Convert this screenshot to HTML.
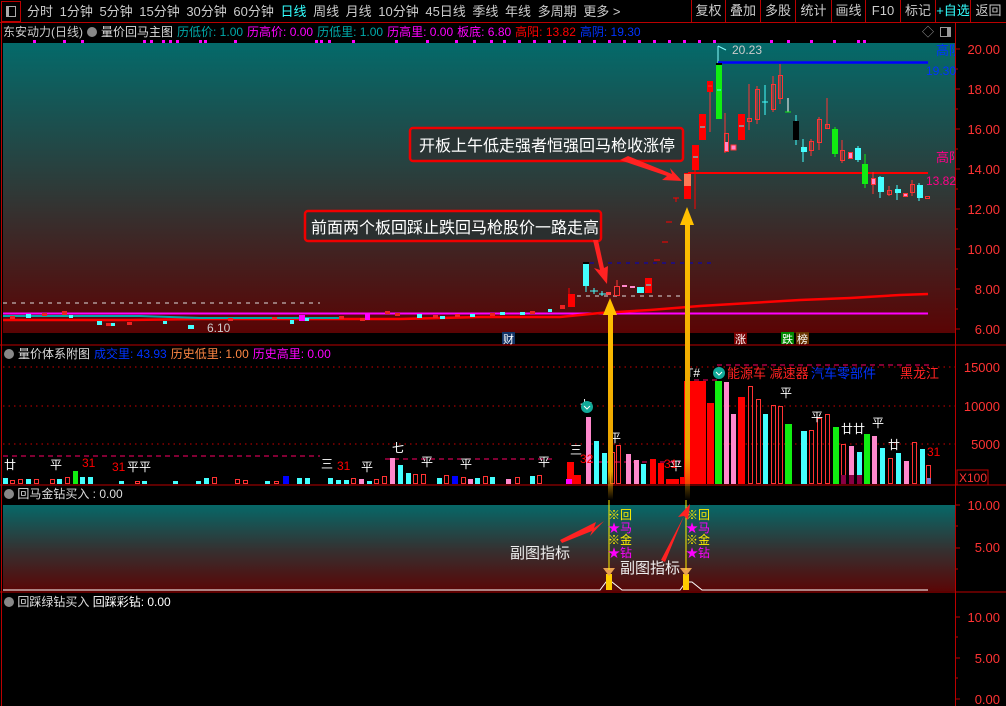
<!DOCTYPE html>
<html><head><meta charset="utf-8"><style>
*{margin:0;padding:0;box-sizing:border-box}
body{width:1006px;height:706px;background:#000;overflow:hidden;position:relative;font-family:"Liberation Sans","Noto Sans CJK SC",sans-serif;font-size:12px;color:#c8c8c8}
.a{position:absolute;white-space:nowrap;line-height:1}
.tb span{margin-right:6.6px}
.tr span{margin-right:4px}
.btn{position:absolute;top:0;height:22px;border-left:1px solid #b00;font-size:13px;line-height:22px;text-align:center;color:#ccc}
</style></head><body>
<div class="a" style="left:0;top:0;width:1006px;height:23px;border-bottom:1px solid #b00"></div>
<div class="a" style="left:1px;top:1px;width:20px;height:21px;border:1px solid #b00"></div>
<div class="a" style="left:6px;top:6px;width:10px;height:11px;border:1px solid #aaa;border-left-width:3px"></div>
<div class="a tb" style="left:27px;top:5px;font-size:13px;color:#ccc"><span>分时</span><span>1分钟</span><span>5分钟</span><span>15分钟</span><span>30分钟</span><span>60分钟</span><span style="color:#3ff">日线</span><span>周线</span><span>月线</span><span>10分钟</span><span>45日线</span><span>季线</span><span>年线</span><span>多周期</span><span>更多 &gt;</span></div>
<div class="btn" style="left:691px;width:34px">复权</div>
<div class="btn" style="left:725px;width:35px">叠加</div>
<div class="btn" style="left:760px;width:35px">多股</div>
<div class="btn" style="left:795px;width:36px">统计</div>
<div class="btn" style="left:831px;width:34px">画线</div>
<div class="btn" style="left:865px;width:35px">F10</div>
<div class="btn" style="left:900px;width:35px">标记</div>
<div class="btn" style="left:935px;width:35px;color:#3ff">+自选</div>
<div class="btn" style="left:970px;width:36px">返回</div>
<div class="a tr" style="left:3px;top:26px;font-size:12px"><span style="color:#ccc">东安动力(日线)</span><span style="display:inline-block;width:10px;height:10px;border-radius:50%;background:#888;vertical-align:-1px"></span><span style="color:#ddd">量价回马主图</span><span style="color:#0aa">历低价: 1.00</span><span style="color:#f0f">历高价: 0.00</span><span style="color:#0aa">历低里: 1.00</span><span style="color:#f0f">历高里: 0.00</span><span style="color:#f0f">板底: 6.80</span><span style="color:#f00">高阳: 13.82</span><span style="color:#03f">高阴: 19.30</span></div>
<div class="a" style="left:922px;top:26px;color:#999;font-size:12px">◇</div>
<div class="a" style="left:940px;top:27px;width:11px;height:10px;border:1px solid #999;border-right-width:4px"></div>
<div class="a" style="left:955px;top:23px;width:1px;height:683px;background:#b00"></div>
<div class="a" style="left:1px;top:23px;width:1px;height:683px;background:#b00"></div>

<svg class="a" style="left:0;top:0" width="1006" height="706" xmlns="http://www.w3.org/2000/svg" font-family="Liberation Sans,Noto Sans CJK SC,sans-serif">
<defs>
<linearGradient id="g1" x1="0" y1="0" x2="0" y2="1"><stop offset="0" stop-color="#046a6a"/><stop offset="0.5" stop-color="#2e3a38"/><stop offset="1" stop-color="#5a0404"/></linearGradient>
<linearGradient id="g2" x1="0" y1="0" x2="0" y2="1"><stop offset="0" stop-color="#066868"/><stop offset="0.5" stop-color="#333"/><stop offset="1" stop-color="#5a0606"/></linearGradient>
<linearGradient id="ga" x1="0" y1="0" x2="0" y2="1"><stop offset="0" stop-color="#ffc000"/><stop offset="0.85" stop-color="#e8a000"/><stop offset="1" stop-color="#e8a000" stop-opacity="0"/></linearGradient>
</defs>
<g fill="#f0f">
<rect x="33" y="40" width="3" height="3"/><rect x="63" y="40" width="3" height="3"/><rect x="81" y="40" width="3" height="3"/><rect x="143" y="40" width="3" height="3"/><rect x="150" y="40" width="3" height="3"/><rect x="162" y="40" width="3" height="3"/><rect x="169" y="40" width="3" height="3"/><rect x="176" y="40" width="3" height="3"/><rect x="199" y="40" width="3" height="3"/><rect x="204" y="40" width="3" height="3"/><rect x="234" y="40" width="3" height="3"/><rect x="315" y="40" width="3" height="3"/><rect x="320" y="40" width="3" height="3"/><rect x="328" y="40" width="3" height="3"/><rect x="352" y="40" width="3" height="3"/><rect x="395" y="40" width="3" height="3"/><rect x="426" y="40" width="3" height="3"/><rect x="455" y="40" width="3" height="3"/><rect x="473" y="40" width="3" height="3"/><rect x="490" y="40" width="3" height="3"/><rect x="503" y="40" width="3" height="3"/><rect x="518" y="40" width="3" height="3"/><rect x="533" y="40" width="3" height="3"/><rect x="548" y="40" width="3" height="3"/><rect x="563" y="40" width="3" height="3"/><rect x="578" y="40" width="3" height="3"/><rect x="593" y="40" width="3" height="3"/><rect x="608" y="40" width="3" height="3"/><rect x="623" y="40" width="3" height="3"/><rect x="638" y="40" width="3" height="3"/><rect x="653" y="40" width="3" height="3"/><rect x="668" y="40" width="3" height="3"/><rect x="683" y="40" width="3" height="3"/><rect x="698" y="40" width="3" height="3"/><rect x="713" y="40" width="3" height="3"/><rect x="770" y="40" width="3" height="3"/><rect x="787" y="40" width="3" height="3"/><rect x="810" y="40" width="3" height="3"/><rect x="833" y="40" width="3" height="3"/><rect x="857" y="40" width="3" height="3"/><rect x="863" y="40" width="3" height="3"/>
</g>
<rect x="3" y="43" width="952" height="290" fill="url(#g1)"/>
<g fill="#f33" font-size="13" text-anchor="end">
<text x="1000" y="54">20.00</text><text x="1000" y="94">18.00</text><text x="1000" y="134">16.00</text><text x="1000" y="174">14.00</text><text x="1000" y="214">12.00</text><text x="1000" y="254">10.00</text><text x="1000" y="294">8.00</text><text x="1000" y="334">6.00</text>
</g>
<g stroke="#b00"><path d="M955 49h5M955 69h3M955 89h5M955 109h3M955 129h5M955 149h3M955 169h5M955 189h3M955 209h5M955 229h3M955 249h5M955 269h3M955 289h5M955 309h3M955 329h5"/></g>
<svg x="0" y="0" width="955" height="340"><text x="936" y="55" fill="#03f" font-size="13">高阴</text><text x="936" y="162" fill="#f08" font-size="13">高阳</text></svg>
<text x="926" y="75" fill="#03f" font-size="12">19.30</text>
<text x="926" y="185" fill="#f08" font-size="12">13.82</text>
<text x="732" y="54" fill="#ccc" font-size="12">20.23</text>
<path d="M718 46v18M718 46l8 4" stroke="#8ff" fill="none"/>
<path d="M718 62.5H928" stroke="#00f" stroke-width="2.5"/>
<path d="M688 173H928" stroke="#f00" stroke-width="2"/>
<path d="M3 313.5H928" stroke="#f0f" stroke-width="2"/>
<path d="M3 320H130L200 319H400L480 317H560L600 313L650 310L700 306L750 303L800 300L850 298L900 295L928 294" stroke="#f00" stroke-width="2.5" fill="none"/>
<path d="M3 303H320" stroke="#ddd" stroke-dasharray="4 5"/>
<path d="M577 296H683" stroke="#ddd" stroke-dasharray="4 5"/>
<path d="M590 263H712" stroke="#00c" stroke-dasharray="4 5"/>
<path d="M3 316H140L200 318H340" stroke="#0aa" stroke-width="2"/>
<g fill="#4ff">
<rect x="26" y="314" width="5" height="4"/><rect x="69" y="315" width="4" height="3"/><rect x="97" y="321" width="5" height="4"/><rect x="110" y="323" width="5" height="3"/><rect x="163" y="321" width="4" height="3"/><rect x="188" y="325" width="6" height="4"/><rect x="290" y="320" width="4" height="4"/><rect x="305" y="318" width="4" height="3"/><rect x="417" y="314" width="5" height="4"/><rect x="440" y="316" width="5" height="3"/><rect x="470" y="314" width="5" height="3"/><rect x="500" y="312" width="5" height="3"/><rect x="520" y="312" width="5" height="3"/><rect x="548" y="309" width="4" height="3"/>
</g>
<g fill="#e22">
<rect x="10" y="316" width="5" height="3"/><rect x="42" y="313" width="5" height="3"/><rect x="62" y="311" width="5" height="4"/><rect x="106" y="323" width="5" height="3"/><rect x="127" y="322" width="5" height="3"/><rect x="228" y="318" width="5" height="3"/><rect x="272" y="317" width="5" height="3"/><rect x="339" y="316" width="5" height="3"/><rect x="385" y="311" width="5" height="3"/><rect x="395" y="313" width="5" height="3"/><rect x="360" y="318" width="5" height="3"/><rect x="433" y="315" width="5" height="3"/><rect x="455" y="314" width="5" height="3"/><rect x="490" y="313" width="5" height="3"/><rect x="530" y="311" width="5" height="3"/><rect x="560" y="305" width="5" height="4"/>
</g>
<rect x="299" y="315" width="6" height="6" fill="#f0f"/><rect x="365" y="314" width="5" height="6" fill="#f0f"/>
<text x="207" y="332" fill="#ccc" font-size="12">6.10</text>
<g stroke-width="1">
<path d="M569 294v-6" stroke="#f00"/><rect x="568" y="294" width="7" height="13" fill="#f00"/>
<path d="M586 262v30" stroke="#4ff"/><rect x="583" y="264" width="6" height="22" fill="#4ff"/><rect x="583" y="262" width="6" height="2" fill="#000"/>
<path d="M590 291h8M594 288v6M599 294h7M602 291v5" stroke="#4ff"/>
<rect x="606" y="292" width="5" height="3" fill="#f44"/>
<rect x="614.5" y="286.5" width="5" height="9" fill="none" stroke="#f33"/><path d="M617 280v6" stroke="#f33"/>
<rect x="622" y="285" width="5" height="2" fill="#f8c"/><rect x="630" y="286" width="5" height="2" fill="#f8c"/>
<rect x="637" y="287" width="7" height="6" fill="#4ff"/>
<rect x="645" y="278" width="7" height="15" fill="#f00"/><path d="M646 285h5" stroke="#4ff"/>
<path d="M654 260h6M662 242h6M666 222h6M673 198h6M676 198v4" stroke="#f00"/>
<rect x="684" y="173" width="7" height="26" fill="#f00"/><rect x="684" y="174" width="7" height="12" fill="#f75"/><path d="M695 169v40" stroke="#f00"/>
<rect x="692" y="145" width="7" height="25" fill="#f00"/><path d="M693 157h5" stroke="#4ff"/>
<rect x="699" y="114" width="7" height="26" fill="#f00"/><path d="M700 127h5" stroke="#4ff"/>
<rect x="707" y="81" width="6" height="11" fill="#f00"/><path d="M710 92v40M708 86h4" stroke="#f33"/>
<rect x="716" y="64" width="6" height="55" fill="#1e1"/><rect x="716" y="63" width="6" height="2" fill="#000"/><path d="M717 90h4" stroke="#4ff"/>
<path d="M725 113v40" stroke="#f33"/><rect x="724.5" y="133.5" width="4" height="18" fill="none" stroke="#f33"/><rect x="725" y="142" width="3" height="9" fill="#f8c"/>
<rect x="731" y="145" width="5" height="5" fill="#f8c" stroke="#f33"/>
<rect x="738" y="114" width="7" height="26" fill="#f00"/><path d="M739 126h5" stroke="#4ff"/>
<path d="M749 84v46" stroke="#f33"/><rect x="747.5" y="118.5" width="4" height="3" fill="none" stroke="#f33"/>
<path d="M757 86v38" stroke="#f33"/><rect x="755.5" y="89.5" width="4" height="30" fill="none" stroke="#f33"/>
<path d="M765 85v30M762 102h6" stroke="#4ff"/>
<path d="M773 76v36" stroke="#f33"/><rect x="771.5" y="84.5" width="4" height="25" fill="none" stroke="#f33"/>
<path d="M780 64v40" stroke="#f33"/><rect x="778.5" y="75.5" width="4" height="23" fill="none" stroke="#f33"/>
<path d="M788 98v14" stroke="#fff"/><path d="M785 112h6" stroke="#1e1"/>
<path d="M796 115v30" stroke="#4ff"/><rect x="793" y="121" width="6" height="19" fill="#000"/>
<path d="M803 139v23" stroke="#4ff"/><rect x="801" y="147" width="6" height="5" fill="#4ff"/>
<path d="M811 139v17" stroke="#f33"/><rect x="809.5" y="141.5" width="4" height="9" fill="none" stroke="#f33"/>
<path d="M819 117v33" stroke="#f33"/><rect x="817.5" y="119.5" width="4" height="23" fill="none" stroke="#f33"/>
<path d="M827 98v30" stroke="#f33"/><rect x="825.5" y="124.5" width="4" height="4" fill="none" stroke="#f33"/>
<rect x="832" y="129" width="6" height="25" fill="#1e1"/><path d="M835 127v30" stroke="#1e1"/>
<path d="M842 140v23" stroke="#f33"/><rect x="840.5" y="150.5" width="4" height="10" fill="none" stroke="#f33"/>
<rect x="848.5" y="152.5" width="4" height="6" fill="#f8c" stroke="#f33"/>
<path d="M858 146v16" stroke="#4ff"/><rect x="855" y="148" width="6" height="12" fill="#4ff"/>
<path d="M865 154v34" stroke="#1e1"/><rect x="862" y="164" width="6" height="20" fill="#1e1"/>
<path d="M873 172v22" stroke="#f33"/><rect x="871.5" y="178.5" width="4" height="6" fill="#f8c" stroke="#f33"/>
<path d="M880 176v22" stroke="#4ff"/><rect x="878" y="177" width="6" height="15" fill="#4ff"/>
<path d="M889 186v10" stroke="#f33"/><rect x="887.5" y="190.5" width="4" height="4" fill="none" stroke="#f33"/>
<path d="M897 185v15" stroke="#4ff"/><rect x="895" y="189" width="6" height="4" fill="#4ff"/>
<rect x="903.5" y="193.5" width="4" height="3" fill="#f8c" stroke="#f33"/>
<path d="M912 180v16" stroke="#f33"/><rect x="910.5" y="184.5" width="4" height="8" fill="none" stroke="#f33"/>
<path d="M919 183v18" stroke="#4ff"/><rect x="917" y="185" width="6" height="13" fill="#4ff"/>
<rect x="925.5" y="196.5" width="4" height="2" fill="none" stroke="#f33"/>
</g>
<rect x="410" y="128" width="273" height="33" rx="3" fill="#2a3535" stroke="#e00" stroke-width="2.5"/>
<text x="419" y="151" fill="#fff" font-size="16">开板上午低走强者恒强回马枪收涨停</text>
<rect x="305" y="211" width="296" height="30" rx="3" fill="#2a2f2f" stroke="#e00" stroke-width="2.5"/>
<text x="311" y="233" fill="#fff" font-size="16">前面两个板回踩止跌回马枪股价一路走高</text>
<path d="M628 156L672 174L670 168L682 181L662 180L667 176L620 160Z" fill="#f22"/>
<path d="M593 240L600 270L594 268L607 284L608 266L604 268L598 240Z" fill="#f22"/>
<rect x="3" y="333" width="952" height="12" fill="#000"/>
<rect x="502" y="332" width="13" height="12" fill="#136"/><text x="503" y="343" fill="#fff" font-size="11">财</text>
<rect x="734" y="332" width="13" height="12" fill="#700"/><text x="735" y="343" fill="#fff" font-size="11">涨</text>
<rect x="781" y="332" width="13" height="12" fill="#080"/><text x="782" y="343" fill="#fff" font-size="11">跌</text>
<rect x="796" y="332" width="13" height="12" fill="#630"/><text x="797" y="343" fill="#fff" font-size="11">榜</text>
<path d="M0 345H1006" stroke="#b00"/>
<g fill="#f33" font-size="13" text-anchor="end"><text x="1000" y="372">15000</text><text x="1000" y="411">10000</text><text x="1000" y="449">5000</text></g>
<rect x="957" y="470" width="31" height="15" fill="none" stroke="#b00"/><text x="959" y="482" fill="#f33" font-size="12">X100</text>
<g stroke="#c00" stroke-dasharray="1.5 4"><path d="M3 367H955M3 406H955M3 444H955"/></g>
<path d="M3 456H320M385 459H555M588 462H680M685 380H717M717 365H930" stroke="#f06" stroke-dasharray="5 4"/>
<g fill="#4ff">
<rect x="3" y="478" width="5" height="6"/><rect x="26" y="479" width="5" height="5"/><rect x="57" y="479" width="5" height="5"/><rect x="80" y="477" width="5" height="7"/><rect x="88" y="477" width="5" height="7"/><rect x="119" y="481" width="5" height="3"/><rect x="142" y="481" width="5" height="3"/><rect x="173" y="481" width="5" height="3"/><rect x="196" y="481" width="5" height="3"/><rect x="204" y="478" width="5" height="6"/><rect x="265" y="481" width="5" height="3"/><rect x="297" y="478" width="5" height="6"/><rect x="305" y="478" width="5" height="6"/><rect x="328" y="478" width="5" height="6"/><rect x="336" y="480" width="5" height="4"/><rect x="344" y="480" width="5" height="4"/><rect x="367" y="481" width="5" height="3"/><rect x="398" y="465" width="5" height="19"/><rect x="406" y="473" width="5" height="11"/><rect x="437" y="478" width="5" height="6"/><rect x="452" y="477" width="5" height="7"/><rect x="475" y="478" width="5" height="6"/><rect x="490" y="477" width="5" height="7"/><rect x="530" y="476" width="5" height="8"/><rect x="594" y="441" width="5" height="43"/><rect x="602" y="453" width="5" height="31"/><rect x="641" y="464" width="5" height="20"/><rect x="763" y="414" width="5" height="70"/><rect x="801" y="431" width="6" height="53"/><rect x="857" y="452" width="5" height="32"/><rect x="880" y="448" width="5" height="36"/><rect x="896" y="453" width="5" height="31"/><rect x="920" y="449" width="5" height="35"/>
</g>
<g fill="none" stroke="#f33">
<rect x="10.5" y="480.5" width="4" height="3"/><rect x="18.5" y="479.5" width="4" height="4"/><rect x="34.5" y="479.5" width="4" height="4"/><rect x="50.5" y="479.5" width="4" height="4"/><rect x="65.5" y="477.5" width="4" height="6"/><rect x="135.5" y="481.5" width="4" height="2"/><rect x="212.5" y="477.5" width="4" height="6"/><rect x="235.5" y="479.5" width="4" height="4"/><rect x="243.5" y="480.5" width="4" height="3"/><rect x="274.5" y="481.5" width="4" height="2"/><rect x="351.5" y="478.5" width="4" height="5"/><rect x="374.5" y="479.5" width="4" height="4"/><rect x="382.5" y="476.5" width="4" height="7"/><rect x="413.5" y="474.5" width="4" height="9"/><rect x="421.5" y="474.5" width="4" height="9"/><rect x="444.5" y="475.5" width="4" height="8"/><rect x="461.5" y="477.5" width="4" height="6"/><rect x="483.5" y="476.5" width="4" height="7"/><rect x="515.5" y="477.5" width="4" height="6"/><rect x="537.5" y="475.5" width="4" height="8"/><rect x="610.5" y="452.5" width="4" height="31"/><rect x="616.5" y="445.5" width="4" height="38"/><rect x="748.5" y="386.5" width="4" height="97"/><rect x="756.5" y="399.5" width="4" height="84"/><rect x="771.5" y="405.5" width="4" height="78"/><rect x="778.5" y="406.5" width="4" height="77"/><rect x="809.5" y="430.5" width="4" height="53"/><rect x="817.5" y="418.5" width="4" height="65"/><rect x="825.5" y="414.5" width="4" height="69"/><rect x="841.5" y="444.5" width="4" height="39"/><rect x="888.5" y="458.5" width="4" height="25"/><rect x="912.5" y="442.5" width="4" height="41"/><rect x="926.5" y="465.5" width="4" height="18"/>
</g>
<g fill="#f00">
<rect x="567" y="462" width="7" height="22"/><rect x="574" y="475" width="7" height="9"/><rect x="650" y="459" width="6" height="25"/><rect x="658" y="463" width="6" height="21"/><rect x="666" y="479" width="13" height="5"/><rect x="680" y="477" width="7" height="7"/><rect x="684" y="381" width="22" height="103"/><rect x="707" y="403" width="7" height="81"/><rect x="738" y="397" width="7" height="87"/>
</g>
<g fill="#f8c"><rect x="359" y="479" width="5" height="5"/><rect x="390" y="458" width="5" height="26"/><rect x="468" y="479" width="5" height="5"/><rect x="506" y="479" width="5" height="5"/><rect x="586" y="417" width="5" height="67"/><rect x="626" y="454" width="5" height="30"/><rect x="634" y="460" width="5" height="24"/><rect x="724" y="382" width="5" height="102"/><rect x="731" y="414" width="5" height="70"/><rect x="849" y="446" width="5" height="38"/><rect x="872" y="436" width="5" height="48"/><rect x="904" y="461" width="5" height="23"/></g>
<g fill="#1e1"><rect x="73" y="471" width="5" height="13"/><rect x="715" y="381" width="7" height="103"/><rect x="785" y="424" width="7" height="60"/><rect x="833" y="427" width="6" height="57"/><rect x="864" y="434" width="6" height="50"/></g>
<rect x="452" y="476" width="6" height="8" fill="#00f"/><rect x="283" y="476" width="6" height="8" fill="#00f"/>
<rect x="566" y="479" width="6" height="5" fill="#f0f"/>
<rect x="841" y="475" width="5" height="9" fill="#804"/><rect x="849" y="475" width="5" height="9" fill="#804"/><rect x="857" y="475" width="5" height="9" fill="#804"/><rect x="927" y="478" width="4" height="6" fill="#77c"/>
<g fill="#fff" font-size="12">
<text x="4" y="469">廿</text><text x="50" y="469">平</text><text x="127" y="471">平平</text><text x="321" y="468">三</text><text x="361" y="471">平</text><text x="392" y="452">七</text><text x="421" y="466">平</text><text x="460" y="468">平</text><text x="538" y="466">平</text><text x="570" y="454">三</text><text x="609" y="442">平</text><text x="670" y="470">平</text><text x="686" y="377">T#</text><text x="780" y="397">平</text><text x="811" y="421">平</text><text x="841" y="433">廿廿</text><text x="872" y="427">平</text><text x="888" y="449">廿</text><text x="580" y="409">七</text>
</g>
<g fill="#f00" font-size="12"><text x="82" y="467">31</text><text x="112" y="471">31</text><text x="337" y="470">31</text><text x="927" y="456">31</text><text x="580" y="463">32</text><text x="664" y="468">31</text></g>
<circle cx="587" cy="407" r="6" fill="#1a9"/><path d="M584 406l3 3 3-3" stroke="#fff" fill="none"/>
<circle cx="719" cy="373" r="6" fill="#1a9"/><path d="M716 372l3 3 3-3" stroke="#fff" fill="none"/>
<text x="727" y="378" fill="#f22" font-size="13">能源车 减速器</text>
<text x="811" y="378" fill="#03f" font-size="13">汽车零部件</text>
<text x="900" y="378" fill="#f22" font-size="13">黑龙江</text>
<path d="M0 485H1006" stroke="#b00"/>
<rect x="3" y="505" width="952" height="86" fill="url(#g2)"/>
<g fill="#f33" font-size="13" text-anchor="end"><text x="1000" y="510">10.00</text><text x="1000" y="552">5.00</text></g>
<path d="M955 505h5M955 526h3M955 548h5M955 569h3" stroke="#b00"/>
<path d="M3 590H600L606 582H612L622 590H680L686 582H692L702 590H928" stroke="#fff" fill="none"/>
<rect x="606" y="574" width="6" height="16" fill="#fc0"/><rect x="683" y="574" width="6" height="16" fill="#fc0"/>
<path d="M603 568h12l-6 8z" fill="#e8a050"/><path d="M680 568h12l-6 8z" fill="#e8a050"/>
<path d="M609 500v70M686 500v70" stroke="#fe0" stroke-width="1"/>
<g font-size="12"><text x="608" y="519" fill="#fe0">※回</text><text x="608" y="532" fill="#f0f">★马</text><text x="608" y="544" fill="#fe0">※金</text><text x="608" y="557" fill="#f0f">★钻</text>
<text x="686" y="519" fill="#fe0">※回</text><text x="686" y="532" fill="#f0f">★马</text><text x="686" y="544" fill="#fe0">※金</text><text x="686" y="557" fill="#f0f">★钻</text></g>
<text x="510" y="558" fill="#eee" font-size="15">副图指标</text>
<text x="620" y="573" fill="#eee" font-size="15">副图指标</text>
<path d="M560 540L596 522L594 528L604 521L590 536L592 531L562 543Z" fill="#f22"/>
<path d="M661 560L684 516L678 517L690 504L688 520L684 516L665 562Z" fill="#f22"/>
<rect x="608" y="310" width="5" height="190" fill="url(#ga)"/><path d="M603 315L610 298L617 315Z" fill="#ffc000"/>
<rect x="685" y="220" width="5" height="280" fill="url(#ga)"/><path d="M680 225L687 207L694 225Z" fill="#ffc000"/>
<path d="M0 592H1006" stroke="#b00"/>
<g fill="#f33" font-size="13" text-anchor="end"><text x="1000" y="622">10.00</text><text x="1000" y="663">5.00</text><text x="1000" y="704">0.00</text></g>
<path d="M955 617h5M955 637h3M955 658h5M955 678h3M955 699h5" stroke="#b00"/>
</svg>
<div class="a tr" style="left:4px;top:348px;font-size:12px"><span style="display:inline-block;width:10px;height:10px;border-radius:50%;background:#888;vertical-align:-1px"></span><span style="color:#ddd">量价体系附图</span><span style="color:#03f">成交里: 43.93</span><span style="color:#f84">历史低里: 1.00</span><span style="color:#f0f">历史高里: 0.00</span></div>
<div class="a" style="left:4px;top:488px;font-size:12px"><span style="display:inline-block;width:10px;height:10px;border-radius:50%;background:#888;vertical-align:-1px"></span> <span style="color:#ddd">回马金钻买入 : 0.00</span></div>
<div class="a" style="left:4px;top:596px;font-size:12px"><span style="display:inline-block;width:10px;height:10px;border-radius:50%;background:#888;vertical-align:-1px"></span> <span style="color:#ddd">回踩绿钻买入</span> <span style="color:#fff">回踩彩钻: 0.00</span></div>
</body></html>
